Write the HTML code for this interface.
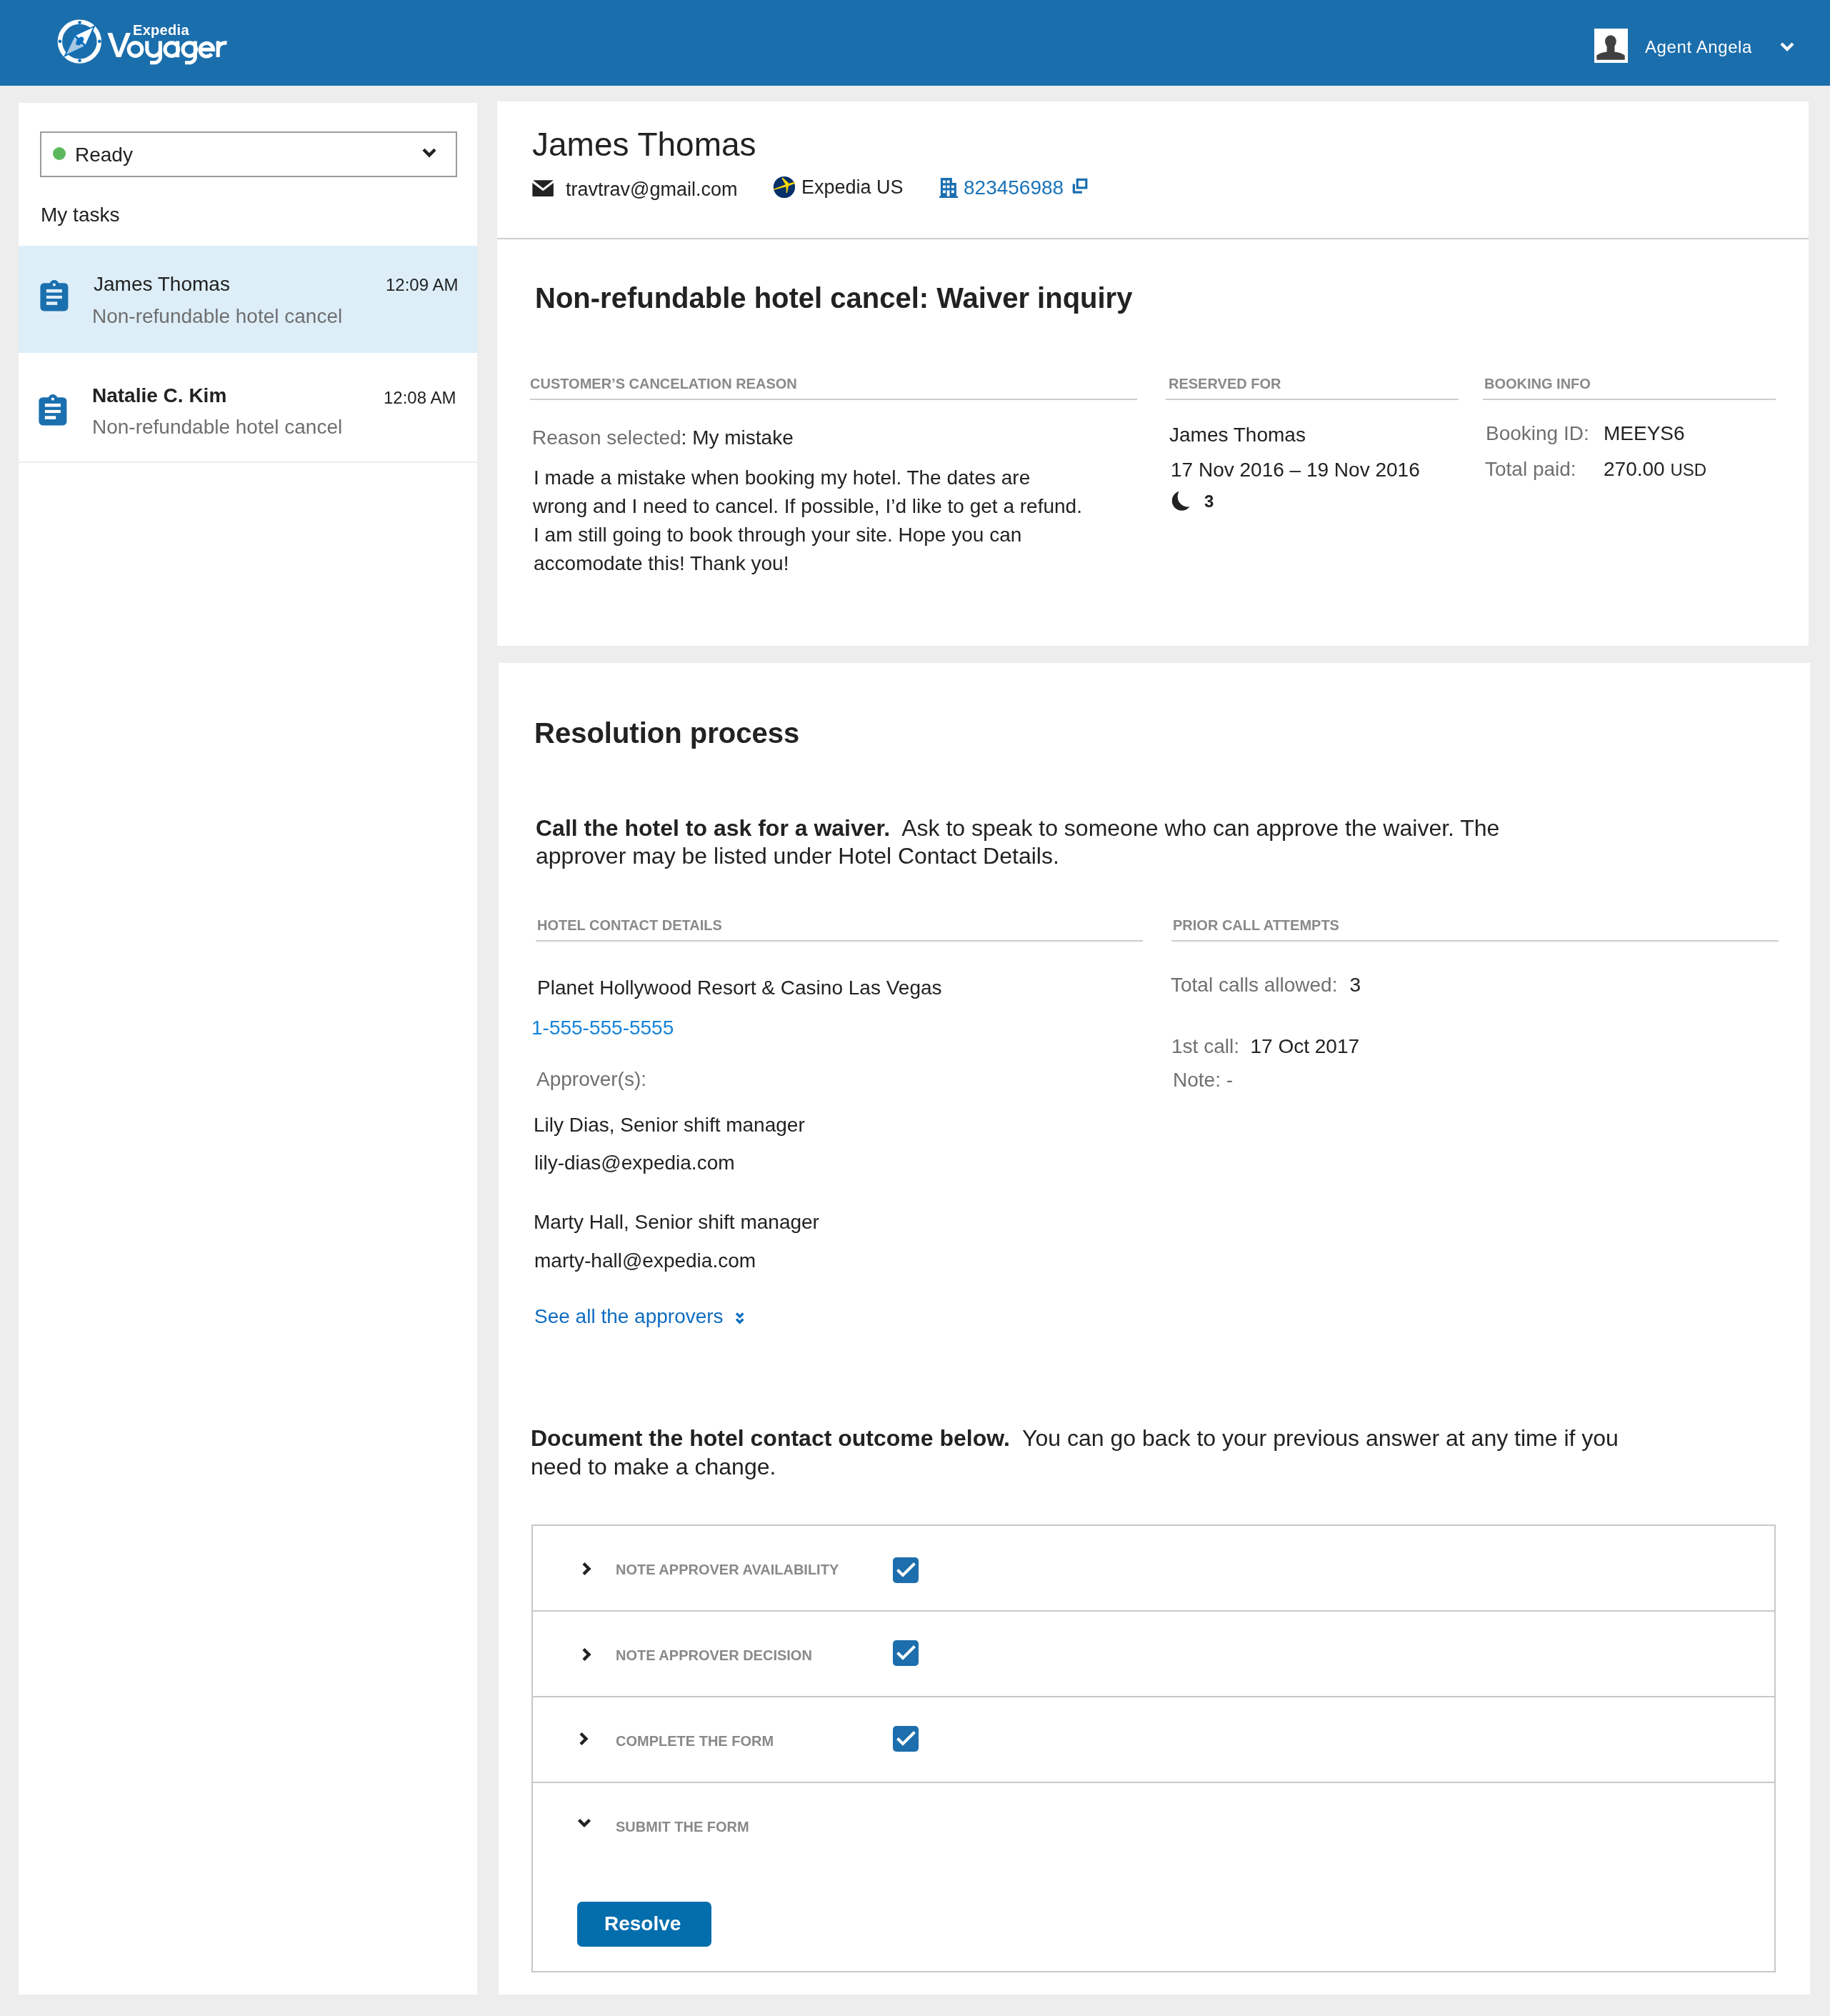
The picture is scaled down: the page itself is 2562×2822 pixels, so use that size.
<!DOCTYPE html>
<html><head><meta charset="utf-8">
<style>
html,body{margin:0;padding:0;}
body{width:2562px;height:2822px;background:#ededed;position:relative;overflow:hidden;-webkit-font-smoothing:antialiased;font-family:"Liberation Sans",sans-serif;color:#222;}
.a{position:absolute;white-space:nowrap;line-height:1;will-change:transform;}
.hdr{position:absolute;left:0;top:0;width:2562px;height:120px;background:#1b6eac;border-bottom:0;}
.side{position:absolute;left:26px;top:144px;width:642px;height:2648px;background:#fff;}
.p1{position:absolute;left:696px;top:142px;width:1836px;height:762px;background:#fff;}
.p2{position:absolute;left:698px;top:928px;width:1836px;height:1864px;background:#fff;}
.f28{font-size:28px;}
.f20b{font-size:20px;font-weight:bold;color:#888;}
.gray{color:#6f6f6f;}
.blue{color:#1a73b6;}
.rule{position:absolute;height:2px;background:#cdcdcd;}
</style></head><body>
<div class="hdr"></div>
<svg class="a" style="left:76px;top:24px" width="72" height="72" viewBox="0 0 72 72">
 <circle cx="35.35" cy="34.1" r="27.5" fill="none" stroke="#fff" stroke-width="6.4"/>
 <g fill="#0b6fbe"><circle cx="35.6" cy="7.6" r="2.3"/><circle cx="35.6" cy="60.7" r="2.3"/><circle cx="7.9" cy="33.9" r="2.3"/><circle cx="63.4" cy="33.9" r="2.3"/></g>
 <path d="M56.2 12.7L43.7 40.5L28.4 25.5Z" fill="#fff" stroke="#0b6fbe" stroke-width="1.8" stroke-linejoin="miter"/>
 <path d="M14.7 54.3L28.4 25.5L43.7 40.5Z" fill="#a8c7e1" stroke="#0b6fbe" stroke-width="1.8" stroke-linejoin="miter"/>
 <path d="M28.4 25.5L43.7 40.5" stroke="#0b6fbe" stroke-width="2.6"/>
 <circle cx="35.8" cy="33.4" r="4.6" fill="#0b6fbe"/><circle cx="38" cy="30.8" r="3.3" fill="#0b6fbe"/><circle cx="33.6" cy="36.2" r="3.3" fill="#0b6fbe"/>
</svg>
<div class="a" style="left:186px;top:32px;font-size:20px;font-weight:bold;color:#fff;letter-spacing:0.3px">Expedia</div>
<svg class="a" style="left:145px;top:25px" width="180" height="70" viewBox="0 0 180 70"><g fill="none" stroke="#fff" stroke-width="5.1">
<circle cx="44.55" cy="44.1" r="9.25"/>
<path d="M60.8 32.5V44.1A9.3 9.3 0 0 0 79.4 44.1V32.5M79.4 44V54.6A8.1 8.1 0 0 1 71.3 62.7H65"/>
<circle cx="95.3" cy="44.1" r="9.25"/><path d="M103.7 32.5V55.1"/>
<circle cx="120.3" cy="44.1" r="9.25"/><path d="M128.3 32.5V54.6A8.1 8.1 0 0 1 120.2 62.7H114"/>
<path d="M135.2 44.4H153.5A9.25 9.25 0 1 0 151.4 50.6"/>
<path d="M160.2 55.1V32.5M160.2 45.5Q160.2 34.6 172.6 34.9"/>
</g><path d="M5.4 21.1H12.2L21.1 48.2L31.4 21.1H37.9L24.3 55.1H17.9Z" fill="#fff"/></svg>
<div class="a" style="left:2232px;top:40px;width:47px;height:48px;background:#fff;overflow:hidden">
 <svg width="47" height="48" viewBox="0 0 47 48"><ellipse cx="22.9" cy="18.1" rx="7.9" ry="8.9" fill="#404040"/><path d="M17.6 24V32.6Q8.5 33.8 3.3 37.6V43.7H42.7V37.6Q37.5 33.8 28.4 32.6V24Z" fill="#404040"/></svg>
</div>
<div class="a" style="left:2303px;top:54px;font-size:24px;color:#fff;letter-spacing:0.6px">Agent Angela</div>
<svg class="a" style="left:2490px;top:56px" width="24" height="20" viewBox="0 0 24 20"><path d="M4 5 L12 13 L20 5" fill="none" stroke="#fff" stroke-width="4.2"/></svg>
<div class="side"></div>
<div class="a" style="left:56px;top:184px;width:580px;height:60px;border:2px solid #9b9b9b;background:#fff"></div>
<div class="a" style="left:74px;top:206px;width:18px;height:18px;border-radius:50%;background:#5cb85c"></div>
<div class="a f28" style="left:105px;top:203px">Ready</div>
<svg class="a" style="left:588px;top:204px" width="26" height="20" viewBox="0 0 26 20"><path d="M5 5.3 L13 13.4 L21 5.3" fill="none" stroke="#222" stroke-width="4.4"/></svg>
<div class="a f28" style="left:57px;top:287px">My tasks</div>
<div class="a" style="left:26px;top:344px;width:642px;height:150px;background:#ddeef9"></div>
<div class="a" style="left:26px;top:646px;width:642px;height:2px;background:#ececec"></div>
<svg class="a" style="left:56px;top:392px" width="40" height="44" viewBox="0 0 40 44"><path d="M5.7 4.2H13.9C14.8 1.8 17.2 0.1 20 0.1C22.8 0.1 25.2 1.8 26.1 4.2H34.1A5.3 5.3 0 0 1 39.4 9.5V38.1A5.3 5.3 0 0 1 34.1 43.4H5.7A5.3 5.3 0 0 1 0.4 38.1V9.5A5.3 5.3 0 0 1 5.7 4.2Z" fill="#1a6fae"/><g fill="#ddeef9"><circle cx="19.9" cy="6.6" r="2.1"/><rect x="8.9" y="12.9" width="22" height="4.6"/><rect x="8.9" y="21.9" width="22" height="4.2"/><rect x="8.9" y="30.3" width="15.3" height="4.6"/></g></svg>
<div class="a f28" style="left:131px;top:384px">James Thomas</div>
<div class="a" style="left:540px;top:387px;font-size:24px">12:09 AM</div>
<div class="a f28 gray" style="left:129px;top:429px">Non-refundable hotel cancel</div>
<svg class="a" style="left:54px;top:552px" width="40" height="44" viewBox="0 0 40 44"><path d="M5.7 4.2H13.9C14.8 1.8 17.2 0.1 20 0.1C22.8 0.1 25.2 1.8 26.1 4.2H34.1A5.3 5.3 0 0 1 39.4 9.5V38.1A5.3 5.3 0 0 1 34.1 43.4H5.7A5.3 5.3 0 0 1 0.4 38.1V9.5A5.3 5.3 0 0 1 5.7 4.2Z" fill="#1a6fae"/><g fill="#fff"><circle cx="19.9" cy="6.6" r="2.1"/><rect x="8.9" y="12.9" width="22" height="4.6"/><rect x="8.9" y="21.9" width="22" height="4.2"/><rect x="8.9" y="30.3" width="15.3" height="4.6"/></g></svg>
<div class="a f28" style="left:129px;top:540px;font-weight:bold">Natalie C. Kim</div>
<div class="a" style="left:537px;top:545px;font-size:24px">12:08 AM</div>
<div class="a f28 gray" style="left:129px;top:584px">Non-refundable hotel cancel</div>
<div class="p1"></div>
<div class="a" style="left:745px;top:179px;font-size:46px;color:#222;">James Thomas</div>
<svg class="a" style="left:745px;top:252px" width="31" height="24" viewBox="0 0 31 24"><path d="M1.1 0.3H29.8L15.3 11.6Z" fill="#222"/><path d="M0.4 4.1L15.3 15.2L29.9 4.1V21.9Q29.9 22.9 28.9 22.9H1.4Q0.4 22.9 0.4 21.9Z" fill="#222"/></svg>
<div class="a" style="left:792px;top:252px;font-size:27px;color:#222;">travtrav@gmail.com</div>
<svg class="a" style="left:1082px;top:246px" width="32" height="32" viewBox="0 0 32 32"><circle cx="15.95" cy="16" r="15.1" fill="#06306a"/><path d="M0.6 18.7L20 11.4L31 8.4V10.8L21.5 14.6L0.9 20.1Z" fill="#fbd800"/><path d="M12.6 3.9L18.3 13.5L18.6 15L18.8 24.1Q19.4 24.6 20 24.1L21.8 14.6L22.3 10.6L14 2.8Q13.1 2.6 12.6 3.9Z" fill="#fbd800"/></svg>
<div class="a" style="left:1122px;top:249px;font-size:27px;color:#222;">Expedia US</div>
<svg class="a" style="left:1314px;top:249px" width="28" height="29" viewBox="0 0 28 29"><path d="M2.9 0H18.9V7.1H24.9V25.6H26.2Q27.4 25.6 27.4 26.85Q27.4 28.1 26.2 28.1H2Q0.8 28.1 0.8 26.85Q0.8 25.6 2 25.6H2.9Z" fill="#1a6fb0"/><g fill="#fff"><rect x="6" y="3.6" width="3.9" height="3.7"/><rect x="11.7" y="3.6" width="3.8" height="3.7"/><rect x="6" y="10.5" width="3.9" height="3.7"/><rect x="11.7" y="10.5" width="3.8" height="3.7"/><rect x="18" y="10.5" width="3.8" height="3.7"/><rect x="6" y="17.4" width="3.9" height="3.8"/><rect x="11.7" y="17.4" width="3.8" height="8.3"/><rect x="18" y="17.4" width="3.8" height="3.8"/></g></svg>
<div class="a" style="left:1349px;top:249px;font-size:28px;color:#1a73b9;">823456988</div>
<svg class="a" style="left:1500px;top:249px" width="24" height="24" viewBox="0 0 24 24"><rect x="8.3" y="2.4" width="12.5" height="11.5" fill="none" stroke="#1a6fb0" stroke-width="3.2"/><path d="M1.7 8.6H5V18.6H14.9V21.8H3.2Q1.7 21.8 1.7 20.3Z" fill="#1a6fb0"/></svg>
<div class="rule" style="left:696px;top:333px;width:1836px"></div>
<div class="a" style="left:749px;top:397px;font-size:40px;font-weight:bold;color:#222;">Non-refundable hotel cancel: Waiver inquiry</div>
<div class="a" style="left:742px;top:527px;font-size:20px;font-weight:bold;color:#898989;">CUSTOMER’S CANCELATION REASON</div>
<div class="a" style="left:1636px;top:527px;font-size:20px;font-weight:bold;color:#898989;">RESERVED FOR</div>
<div class="a" style="left:2078px;top:527px;font-size:20px;font-weight:bold;color:#898989;">BOOKING INFO</div>
<div class="rule" style="left:742px;top:558px;width:850px"></div>
<div class="rule" style="left:1632px;top:558px;width:410px"></div>
<div class="rule" style="left:2076px;top:558px;width:410px"></div>
<div class="a" style="left:745px;top:599px;font-size:28px;color:#222;"><span style="color:#707070">Reason selected</span>: My mistake</div>
<div class="a" style="left:747px;top:655px;font-size:28px;color:#222;">I made a mistake when booking my hotel. The dates are</div>
<div class="a" style="left:746px;top:695px;font-size:28px;color:#222;">wrong and I need to cancel. If possible, I’d like to get a refund.</div>
<div class="a" style="left:747px;top:735px;font-size:28px;color:#222;">I am still going to book through your site. Hope you can</div>
<div class="a" style="left:747px;top:775px;font-size:28px;color:#222;">accomodate this! Thank you!</div>
<div class="a" style="left:1637px;top:595px;font-size:28px;color:#222;">James Thomas</div>
<div class="a" style="left:1639px;top:644px;font-size:28px;color:#222;">17 Nov 2016 – 19 Nov 2016</div>
<svg class="a" style="left:1640px;top:686px" width="30" height="30" viewBox="0 0 30 30"><mask id="mm"><rect width="30" height="30" fill="#fff"/><circle cx="23" cy="9.2" r="14.3" fill="#000"/></mask><circle cx="14.5" cy="15" r="13.7" fill="#222" mask="url(#mm)"/></svg>
<div class="a" style="left:1686px;top:690px;font-size:24px;font-weight:bold;color:#222;">3</div>
<div class="a" style="left:2080px;top:593px;font-size:28px;color:#707070;">Booking ID:</div>
<div class="a" style="left:2245px;top:593px;font-size:28px;color:#222;">MEEYS6</div>
<div class="a" style="left:2079px;top:643px;font-size:28px;color:#707070;">Total paid:</div>
<div class="a" style="left:2245px;top:643px;font-size:28px;color:#222;">270.00 <span style="font-size:24px">USD</span></div>
<div class="p2"></div>
<div class="a" style="left:748px;top:1006px;font-size:40px;font-weight:bold;color:#222;">Resolution process</div>
<div class="a" style="left:750px;top:1143px;font-size:32px;color:#222;"><b>Call the hotel to ask for a waiver.</b>&nbsp; Ask to speak to someone who can approve the waiver. The</div>
<div class="a" style="left:750px;top:1182px;font-size:32px;color:#222;">approver may be listed under Hotel Contact Details.</div>
<div class="a" style="left:752px;top:1285px;font-size:20px;font-weight:bold;color:#898989;">HOTEL CONTACT DETAILS</div>
<div class="a" style="left:1642px;top:1285px;font-size:20px;font-weight:bold;color:#898989;">PRIOR CALL ATTEMPTS</div>
<div class="rule" style="left:750px;top:1316px;width:850px"></div>
<div class="rule" style="left:1640px;top:1316px;width:850px"></div>
<div class="a" style="left:752px;top:1369px;font-size:28px;color:#222;">Planet Hollywood Resort &amp; Casino Las Vegas</div>
<div class="a" style="left:744px;top:1425px;font-size:28px;color:#1482d8;">1-555-555-5555</div>
<div class="a" style="left:751px;top:1497px;font-size:28px;color:#707070;">Approver(s):</div>
<div class="a" style="left:747px;top:1561px;font-size:28px;color:#222;">Lily Dias, Senior shift manager</div>
<div class="a" style="left:748px;top:1614px;font-size:28px;color:#222;">lily-dias@expedia.com</div>
<div class="a" style="left:747px;top:1697px;font-size:28px;color:#222;">Marty Hall, Senior shift manager</div>
<div class="a" style="left:748px;top:1751px;font-size:28px;color:#222;">marty-hall@expedia.com</div>
<div class="a" style="left:748px;top:1829px;font-size:28px;color:#0f6cc0;">See all the approvers</div>
<svg class="a" style="left:1029px;top:1836px" width="15" height="18" viewBox="0 0 15 18"><path d="M2 2.4L6.7 7.1L11.4 2.4M2 10.5L6.7 15.2L11.4 10.5" fill="none" stroke="#0f6cc0" stroke-width="3.3"/></svg>
<div class="a" style="left:1639px;top:1365px;font-size:28px;color:#707070;">Total calls allowed:&nbsp; <span style="color:#222;margin-left:1.5px">3</span></div>
<div class="a" style="left:1640px;top:1451px;font-size:28px;color:#707070;">1st call:&nbsp; <span style="color:#222">17 Oct 2017</span></div>
<div class="a" style="left:1642px;top:1498px;font-size:28px;color:#707070;">Note: -</div>
<div class="a" style="left:743px;top:1997px;font-size:32px;color:#222;"><b>Document the hotel contact outcome below.</b>&nbsp; You can go back to your previous answer at any time if you</div>
<div class="a" style="left:743px;top:2037px;font-size:32px;color:#222;">need to make a change.</div>
<div class="a" style="left:744px;top:2134px;width:1738px;height:623px;border:2px solid #c8c8c8"></div>
<div class="rule" style="left:746px;top:2254px;width:1738px;background:#c8c8c8"></div>
<div class="rule" style="left:746px;top:2374px;width:1738px;background:#c8c8c8"></div>
<div class="rule" style="left:746px;top:2494px;width:1738px;background:#c8c8c8"></div>
<svg class="a" style="left:814px;top:2186px" width="14" height="20" viewBox="0 0 14 20"><path d="M3 2.5L10.5 10L3 17.5" fill="none" stroke="#222" stroke-width="4.4"/></svg>
<div class="a" style="left:862px;top:2187px;font-size:20px;font-weight:bold;color:#898989;">NOTE APPROVER AVAILABILITY</div>
<svg class="a" style="left:1250px;top:2180px" width="36" height="36" viewBox="0 0 36 36"><rect width="36" height="36" rx="5" fill="#1c6eac"/><path d="M6.5 17.5L14 25L30.5 8.5" fill="none" stroke="#fff" stroke-width="4"/></svg>
<svg class="a" style="left:814px;top:2306px" width="14" height="20" viewBox="0 0 14 20"><path d="M3 2.5L10.5 10L3 17.5" fill="none" stroke="#222" stroke-width="4.4"/></svg>
<div class="a" style="left:862px;top:2307px;font-size:20px;font-weight:bold;color:#898989;">NOTE APPROVER DECISION</div>
<svg class="a" style="left:1250px;top:2296px" width="36" height="36" viewBox="0 0 36 36"><rect width="36" height="36" rx="5" fill="#1c6eac"/><path d="M6.5 17.5L14 25L30.5 8.5" fill="none" stroke="#fff" stroke-width="4"/></svg>
<svg class="a" style="left:810px;top:2424px" width="14" height="20" viewBox="0 0 14 20"><path d="M3 2.5L10.5 10L3 17.5" fill="none" stroke="#222" stroke-width="4.4"/></svg>
<div class="a" style="left:862px;top:2427px;font-size:20px;font-weight:bold;color:#898989;">COMPLETE THE FORM</div>
<svg class="a" style="left:1250px;top:2416px" width="36" height="36" viewBox="0 0 36 36"><rect width="36" height="36" rx="5" fill="#1c6eac"/><path d="M6.5 17.5L14 25L30.5 8.5" fill="none" stroke="#fff" stroke-width="4"/></svg>
<svg class="a" style="left:808px;top:2544px" width="20" height="16" viewBox="0 0 20 16"><path d="M2.5 3.5L10 11L17.5 3.5" fill="none" stroke="#222" stroke-width="4.4"/></svg>
<div class="a" style="left:862px;top:2547px;font-size:20px;font-weight:bold;color:#898989;">SUBMIT THE FORM</div>
<div class="a" style="left:808px;top:2662px;width:188px;height:63px;border-radius:7px;background:#046eac"></div>
<div class="a" style="left:846px;top:2679px;font-size:28px;font-weight:bold;color:#fff;">Resolve</div>
</body></html>
